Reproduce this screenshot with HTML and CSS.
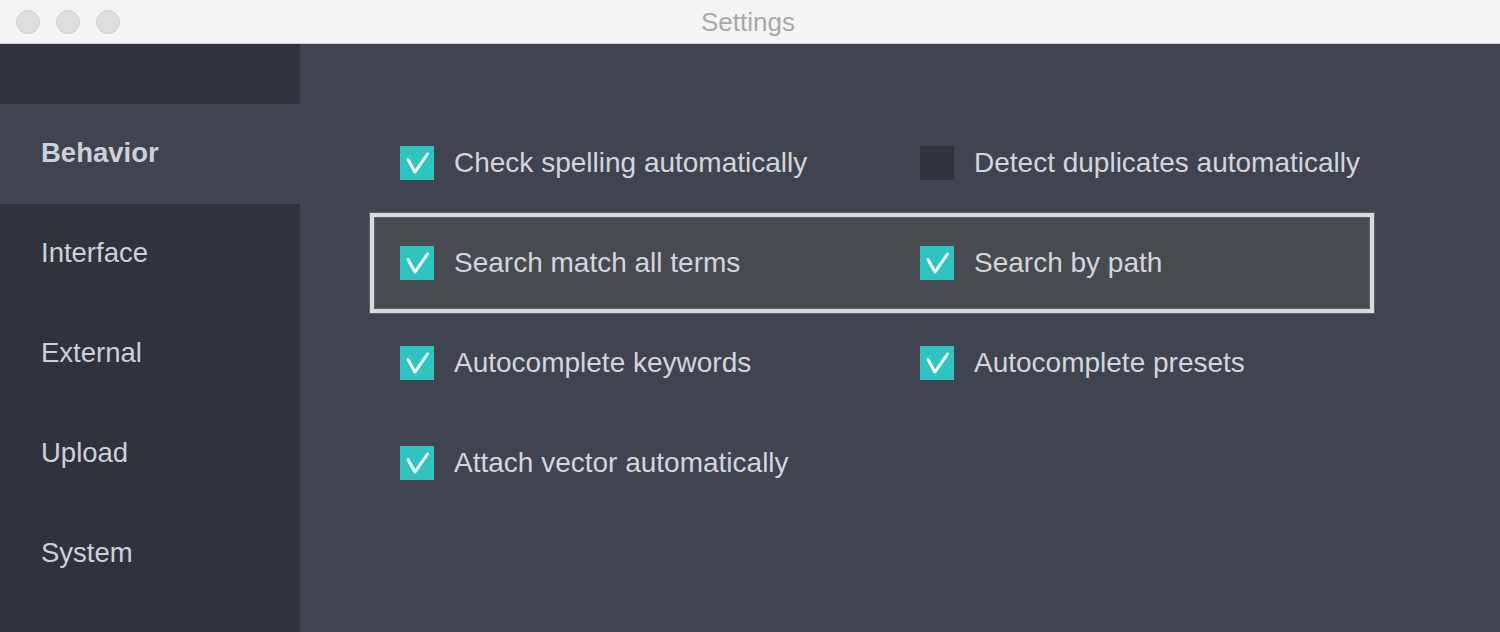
FILE: index.html
```html
<!DOCTYPE html>
<html>
<head>
<meta charset="utf-8">
<title>Settings</title>
<link rel="stylesheet" href="styles.css">
</head>
<body>
<div class="window">
  <header class="titlebar">
    <div class="lights">
      <span class="light"></span>
      <span class="light"></span>
      <span class="light"></span>
    </div>
    <div class="title">Settings</div>
  </header>
  <div class="body">
    <nav class="sidebar">
      <div class="nav-item active">Behavior</div>
      <div class="nav-item">Interface</div>
      <div class="nav-item">External</div>
      <div class="nav-item">Upload</div>
      <div class="nav-item">System</div>
    </nav>
    <main class="content">
      <div class="row">
        <label class="option"><span class="box checked"><svg viewBox="0 0 34 34"><path d="M8 13.5 L15 26 L27.5 8"/></svg></span><span class="label">Check spelling automatically</span></label>
        <label class="option"><span class="box"></span><span class="label">Detect duplicates automatically</span></label>
      </div>
      <div class="row focused">
        <label class="option"><span class="box checked"><svg viewBox="0 0 34 34"><path d="M8 13.5 L15 26 L27.5 8"/></svg></span><span class="label">Search match all terms</span></label>
        <label class="option"><span class="box checked"><svg viewBox="0 0 34 34"><path d="M8 13.5 L15 26 L27.5 8"/></svg></span><span class="label">Search by path</span></label>
      </div>
      <div class="row">
        <label class="option"><span class="box checked"><svg viewBox="0 0 34 34"><path d="M8 13.5 L15 26 L27.5 8"/></svg></span><span class="label">Autocomplete keywords</span></label>
        <label class="option"><span class="box checked"><svg viewBox="0 0 34 34"><path d="M8 13.5 L15 26 L27.5 8"/></svg></span><span class="label">Autocomplete presets</span></label>
      </div>
      <div class="row">
        <label class="option"><span class="box checked"><svg viewBox="0 0 34 34"><path d="M8 13.5 L15 26 L27.5 8"/></svg></span><span class="label">Attach vector automatically</span></label>
      </div>
    </main>
  </div>
</div>
</body>
</html>
```
FILE: styles.css
```css
html, body {
  margin: 0;
  padding: 0;
  height: 100%;
  background: #40444e;
  font-family: "Liberation Sans", Arial, Helvetica, sans-serif;
}

.window {
  display: flex;
  flex-direction: column;
  height: 632px;
  overflow: hidden;
}

.titlebar {
  height: 43px;
  flex: 0 0 43px;
  background: #f5f5f5;
  border-bottom: 1px solid #cfcfcf;
  display: flex;
  align-items: center;
  justify-content: center;
  position: relative;
}

.lights {
  position: absolute;
  left: 16px;
  top: 10px;
  display: flex;
  gap: 16px;
}

.light {
  width: 22px;
  height: 22px;
  border-radius: 50%;
  background: #dedede;
  border: 1px solid #cfcfcf;
}

.title {
  font-size: 26px;
  color: #a8a8a8;
  margin-top: 2px;
  margin-left: -4px;
}

.body {
  flex: 1;
  display: flex;
}

.sidebar {
  width: 300px;
  flex: 0 0 300px;
  background: #31333c;
  padding-top: 60px;
  box-sizing: border-box;
}

.nav-item {
  height: 100px;
  box-sizing: border-box;
  display: flex;
  align-items: center;
  padding-left: 41px;
  padding-bottom: 2px;
  font-size: 27.5px;
  color: #cdd1d8;
}

.nav-item.active {
  background: #40444e;
  font-weight: bold;
}

.content {
  flex: 1;
  padding: 69px 0 0 70px;
  display: flex;
  flex-direction: column;
}

.row {
  width: 1004px;
  height: 100px;
  box-sizing: border-box;
  border: 4px solid transparent;
  padding-left: 26px;
  display: grid;
  grid-template-columns: 520px 1fr;
  align-items: center;
}

.row.focused {
  border-color: #d9d9d9;
  background: #474b50;
  box-shadow: 0 0 0 1px #5e6167, inset 0 0 0 1px #5e6167;
}

.option {
  display: flex;
  align-items: center;
  gap: 20px;
}

.box {
  width: 34px;
  height: 34px;
  flex: 0 0 34px;
  background: #31333c;
  display: block;
}

.box.checked {
  background: #2ec4c1;
}

.box svg {
  display: block;
  width: 34px;
  height: 34px;
}

.box svg path {
  fill: none;
  stroke: #ffffff;
  stroke-width: 3;
  stroke-linecap: round;
  stroke-linejoin: round;
}

.label {
  font-size: 28px;
  color: #d3d6dc;
  white-space: nowrap;
}
```
